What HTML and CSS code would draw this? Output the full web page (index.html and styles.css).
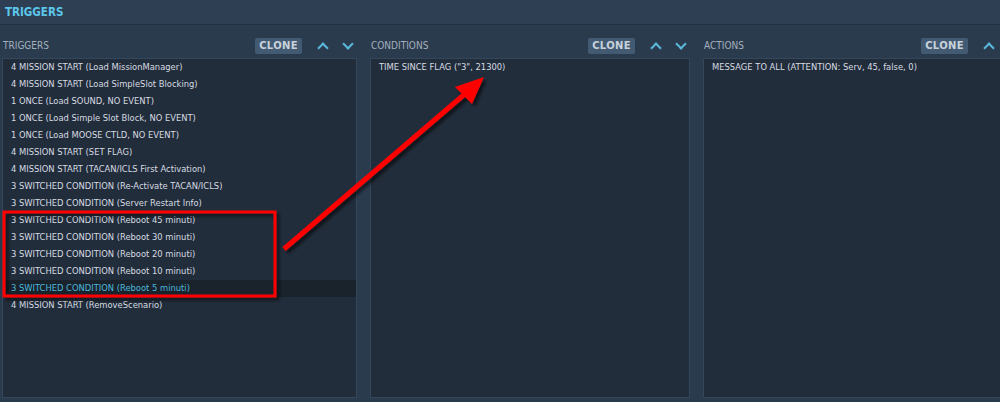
FILE: index.html
```html
<!DOCTYPE html>
<html lang="en">
<head>
  <meta charset="UTF-8" />
  <title>Triggers</title>
  <link rel="stylesheet" href="styles.css">
</head>
<body>
  <header class="topbar">TRIGGERS</header>

  <main class="columns">
    <section class="column">
      <div class="column-head">
        <span class="column-title">TRIGGERS</span>
        <button class="clone-btn">CLONE</button>
        <span class="chev up"></span>
        <span class="chev down"></span>
      </div>
      <ul class="list">
        <li>4 MISSION START (Load MissionManager)</li>
        <li>4 MISSION START (Load SimpleSlot Blocking)</li>
        <li>1 ONCE (Load SOUND, NO EVENT)</li>
        <li>1 ONCE (Load Simple Slot Block, NO EVENT)</li>
        <li>1 ONCE (Load MOOSE CTLD, NO EVENT)</li>
        <li>4 MISSION START (SET FLAG)</li>
        <li>4 MISSION START (TACAN/ICLS First Activation)</li>
        <li>3 SWITCHED CONDITION (Re-Activate TACAN/ICLS)</li>
        <li>3 SWITCHED CONDITION (Server Restart Info)</li>
        <li>3 SWITCHED CONDITION (Reboot 45 minuti)</li>
        <li>3 SWITCHED CONDITION (Reboot 30 minuti)</li>
        <li>3 SWITCHED CONDITION (Reboot 20 minuti)</li>
        <li>3 SWITCHED CONDITION (Reboot 10 minuti)</li>
        <li class="selected">3 SWITCHED CONDITION (Reboot 5 minuti)</li>
        <li>4 MISSION START (RemoveScenario)</li>
      </ul>
    </section>

    <section class="column">
      <div class="column-head">
        <span class="column-title">CONDITIONS</span>
        <button class="clone-btn">CLONE</button>
        <span class="chev up"></span>
        <span class="chev down"></span>
      </div>
      <ul class="list">
        <li>TIME SINCE FLAG ("3", 21300)</li>
      </ul>
    </section>

    <section class="column">
      <div class="column-head">
        <span class="column-title">ACTIONS</span>
        <button class="clone-btn">CLONE</button>
        <span class="chev up"></span>
        <span class="chev down"></span>
      </div>
      <ul class="list">
        <li>MESSAGE TO ALL (ATTENTION: Serv, 45, false, 0)</li>
      </ul>
    </section>
  </main>

  <!-- annotation drawn over the screenshot -->
  <svg class="annotation" width="1000" height="402" viewBox="0 0 1000 402">
    <defs>
      <filter id="shade" x="-10%" y="-10%" width="130%" height="130%">
        <feDropShadow dx="3" dy="3" stdDeviation="1.5" flood-color="#000" flood-opacity="0.55"/>
      </filter>
    </defs>
    <g filter="url(#shade)">
      <rect x="4" y="212" width="271" height="84" fill="none" stroke="#ff0000" stroke-width="3"/>
      <line x1="284" y1="249" x2="466" y2="93" stroke="#ff0000" stroke-width="5"/>
      <polygon points="484,77 455,87 472,104" fill="#ff0000"/>
    </g>
  </svg>
</body>
</html>
```

FILE: styles.css
```css
body {
  margin: 0;
  width: 1000px;
  height: 402px;
  overflow: hidden;
  position: relative;
  background: #2b3b4e;
  font-family: "DejaVu Sans Condensed", "DejaVu Sans", sans-serif;
  font-stretch: semi-condensed;
  color: #d6dce2;
}

.topbar {
  height: 24px;
  line-height: 24px;
  padding-left: 5px;
  background: #2e3f53;
  border-bottom: 1px solid #24323f;
  color: #5cc6ea;
  font-weight: bold;
  font-size: 11.5px;
}

.columns {
  display: grid;
  grid-template-columns: 355px 320px 320px;
  gap: 13px;
  padding: 8px 0 0 2px;
}

.column {
  display: flex;
  flex-direction: column;
}

.column-head {
  display: flex;
  align-items: center;
  height: 25px;
}

.column-title {
  flex: 1;
  padding-left: 1px;
  font-size: 10px;
  color: #a3b0bd;
}

.clone-btn {
  width: 47px;
  height: 16px;
  padding: 0;
  border: none;
  border-radius: 2px;
  background: #435a73;
  color: #c9d2db;
  font-family: "DejaVu Sans", sans-serif;
  font-weight: bold;
  font-size: 10px;
  letter-spacing: 0.3px;
}

.chev {
  width: 8px;
  height: 8px;
  border-left: 2px solid #5ab8dd;
  border-top: 2px solid #5ab8dd;
  box-sizing: border-box;
  margin-left: 17px;
}

.chev.up {
  transform: rotate(45deg);
  margin-top: 4px;
}

.chev.down {
  transform: rotate(225deg);
  margin-top: -4px;
  margin-right: 5px;
}

.list {
  list-style: none;
  margin: 0;
  padding: 0;
  height: 338px;
  background: #222d3b;
  border: 1px solid #34475c;
  font-size: 9.3px;
}

.list li {
  height: 17px;
  line-height: 16px;
  padding-left: 8px;
  white-space: nowrap;
}

.list li.selected {
  background: #1a222c;
  color: #4bb9dc;
}

.annotation {
  position: absolute;
  left: 0;
  top: 0;
  pointer-events: none;
}
```
